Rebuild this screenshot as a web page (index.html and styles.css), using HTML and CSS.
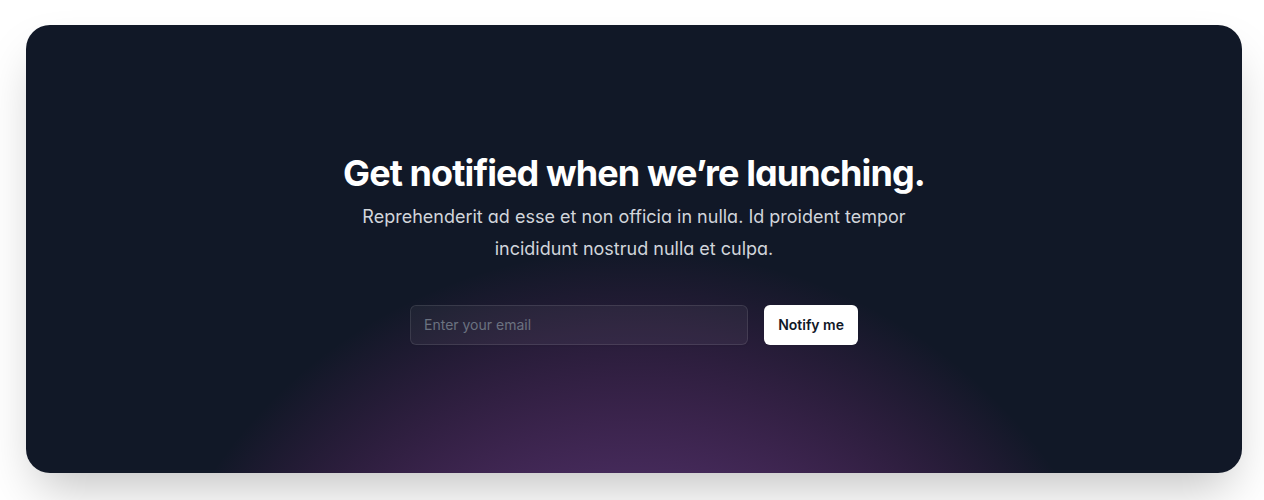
FILE: index.html
```html
<!DOCTYPE html>
<html lang="en">
<head>
<meta charset="utf-8">
<title>Newsletter</title>
<link rel="stylesheet" href="styles.css">
</head>
<body>
<div class="page">
  <div class="card">
    <h2 class="title">Get notified when we’re launching.</h2>
    <p class="lead">Reprehenderit ad esse et non officia in nulla. Id proident tempor incididunt nostrud nulla et culpa.</p>
    <form class="form">
      <input class="email" type="email" placeholder="Enter your email">
      <button class="btn" type="button">Notify me</button>
    </form>
    <svg class="glow" viewBox="0 0 1024 1024" aria-hidden="true">
      <circle cx="512" cy="512" r="512" fill="url(#g)" fill-opacity="0.7"></circle>
      <defs>
        <radialGradient id="g" cx="0" cy="0" r="1" gradientUnits="userSpaceOnUse" gradientTransform="translate(512 512) rotate(90) scale(512)">
          <stop stop-color="#7775D6"></stop>
          <stop offset="1" stop-color="#E935C1" stop-opacity="0"></stop>
        </radialGradient>
      </defs>
    </svg>
  </div>
</div>
</body>
</html>
```
FILE: styles.css
```css
* { box-sizing: border-box; }
html, body { margin: 0; padding: 0; background: #fff; }
body {
  font-family: Inter, "Liberation Sans", sans-serif;
  font-feature-settings: "cv11";
}
.page {
  padding: 25px 22px 27px 26px;
}
.card {
  position: relative;
  isolation: isolate;
  overflow: hidden;
  background: #111827;
  border-radius: 24px;
  padding: 128px 96px;
  box-shadow: 0 25px 50px -12px rgba(0, 0, 0, 0.25);
}
.title {
  margin: 0 auto;
  max-width: 672px;
  text-align: center;
  font-size: 36px;
  line-height: 40px;
  font-weight: 700;
  letter-spacing: -0.025em;
  color: #fff;
}
.lead {
  margin: 8px auto 0;
  max-width: 576px;
  text-align: center;
  font-size: 18px;
  line-height: 32px;
  color: #d1d5db;
}
.form {
  margin: 40px auto 0;
  max-width: 448px;
  display: flex;
  gap: 16px;
}
.email {
  min-width: 0;
  flex: 1 1 auto;
  border: 0;
  border-radius: 6px;
  background: rgba(255, 255, 255, 0.05);
  box-shadow: inset 0 0 0 1px rgba(255, 255, 255, 0.1), 0 1px 2px rgba(0, 0, 0, 0.05);
  padding: 8px 14px;
  font-family: Inter, "Liberation Sans", sans-serif;
  font-feature-settings: normal;
  font-size: 14px;
  line-height: 24px;
  color: #fff;
  outline: none;
}
.email::placeholder { color: #6b7280; }
.btn {
  flex: none;
  border: 0;
  border-radius: 6px;
  background: #fff;
  padding: 10px 14px;
  font-family: Inter, "Liberation Sans", sans-serif;
  font-feature-settings: normal;
  font-size: 14px;
  line-height: 20px;
  font-weight: 600;
  color: #111827;
  box-shadow: 0 1px 2px rgba(0, 0, 0, 0.05);
  cursor: pointer;
}
.glow {
  position: absolute;
  left: 50%;
  top: 50%;
  z-index: -10;
  width: 1024px;
  height: 1024px;
  transform: translateX(-50%);
}
```
